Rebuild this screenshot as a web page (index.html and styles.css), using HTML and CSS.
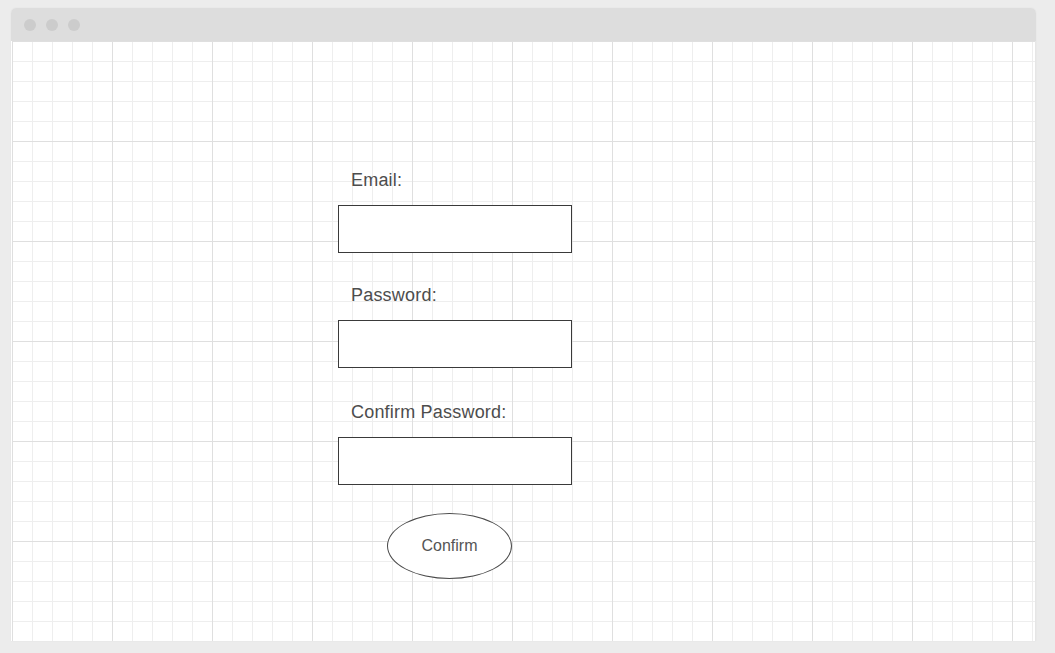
FILE: index.html
```html
<!DOCTYPE html>
<html lang="en">
<head>
<meta charset="utf-8">
<title>Sign up</title>
<link rel="stylesheet" href="styles.css">
</head>
<body>
<div class="window">
  <div class="titlebar">
    <span class="dot"></span>
    <span class="dot"></span>
    <span class="dot"></span>
  </div>
  <div class="canvas">
    <form class="form">
      <div class="field">
        <label class="label" for="email">Email:</label>
        <input class="input" id="email" type="text">
      </div>
      <div class="field">
        <label class="label" for="pw">Password:</label>
        <input class="input" id="pw" type="password">
      </div>
      <div class="field field-last">
        <label class="label" for="pw2">Confirm Password:</label>
        <input class="input" id="pw2" type="password">
      </div>
      <button class="confirm" type="button">Confirm</button>
    </form>
  </div>
</div>
</body>
</html>
```

FILE: styles.css
```css
html, body {
  margin: 0;
  padding: 0;
}

body {
  background: #ececec;
  font-family: "Liberation Sans", Arial, sans-serif;
  width: 1055px;
  height: 653px;
  overflow: hidden;
}

.window {
  margin: 8px 0 0 11px;
  width: 1025px;
  height: 633px;
  border-radius: 5px 5px 0 0;
  overflow: hidden;
  background: #ffffff;
  box-shadow: 0 0 1px rgba(0, 0, 0, 0.12);
  display: flex;
  flex-direction: column;
}

.titlebar {
  height: 33px;
  flex: none;
  background: #dddddd;
  display: flex;
  align-items: center;
  gap: 10px;
  padding-left: 13px;
}

.dot {
  width: 12px;
  height: 12px;
  border-radius: 50%;
  background: #cccccc;
}

.canvas {
  flex: 1;
  margin-left: 1px;
  background-color: #ffffff;
  background-image:
    linear-gradient(to right, #dfdfdf 1px, transparent 1px),
    linear-gradient(to bottom, #dfdfdf 1px, transparent 1px),
    linear-gradient(to right, #eeeeee 1px, transparent 1px),
    linear-gradient(to bottom, #eeeeee 1px, transparent 1px);
  background-size: 100px 100px, 100px 100px, 20px 20px, 20px 20px;
  background-position: 0 0;
  border-right: 1px solid #e6e6e6;
}

.form {
  margin: 0;
  padding: 129px 0 0 326px;
  display: flex;
  flex-direction: column;
  align-items: flex-start;
}

.field {
  display: flex;
  flex-direction: column;
  gap: 15px;
  margin-bottom: 32px;
}

.field-last {
  margin-bottom: 28px;
  padding-top: 2px;
}

.label {
  font-size: 18px;
  line-height: 20px;
  letter-spacing: 0.2px;
  color: #4d4d4d;
  margin-left: 13px;
}

.input {
  box-sizing: border-box;
  width: 234px;
  height: 48px;
  margin: 0;
  border: 1px solid #3a3a3a;
  border-radius: 0;
  background: #ffffff;
  outline: none;
  padding: 0 8px;
  font-family: inherit;
  font-size: 16px;
}

.confirm {
  box-sizing: border-box;
  margin-left: 49px;
  width: 125px;
  height: 66px;
  border: 1px solid #4a4a4a;
  border-radius: 50%;
  background: #ffffff;
  font-family: "Liberation Sans", Arial, sans-serif;
  font-size: 16px;
  color: #555555;
  padding: 0;
  cursor: pointer;
}
```
